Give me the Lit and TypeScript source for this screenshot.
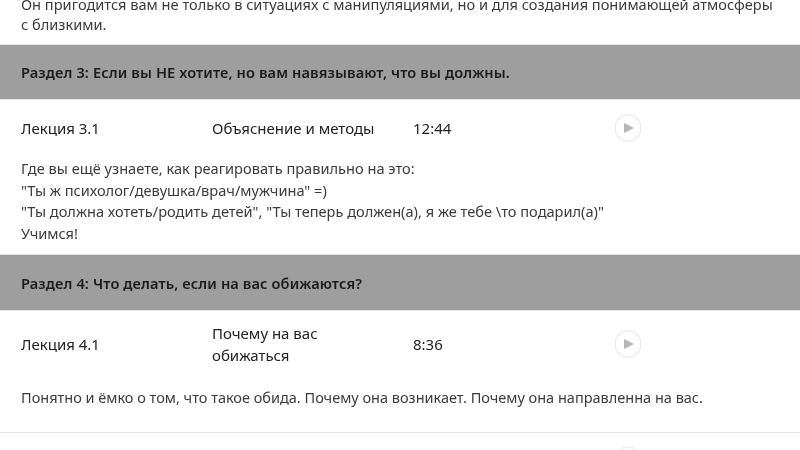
import { LitElement, html, css } from "lit";
import { customElement } from "lit/decorators.js";

const play = html`<svg class="play" viewBox="0 0 28 28" width="28" height="28" aria-hidden="true">
  <circle cx="14" cy="14" r="13" fill="none" stroke="#f0f0f0" stroke-width="1.6"></circle>
  <path d="M10 9 L20 14 L10 19 Z" fill="#b6b6b6"></path>
</svg>`;

@customElement("app-root")
export class AppRoot extends LitElement {
  static styles = css`
    :host { display: block; width: 800px; height: 450px; overflow: hidden; background: #fff; }
    .page { margin-top: -6px; font-family: "Noto Sans", "Open Sans", sans-serif; font-size: 14.6px; color: #333; filter: blur(0.5px); }
    .text { padding: 0 21px; line-height: 21.5px; color: #3c3c3c; }
    .intro { height: 50px; line-height: 20px; }
    .band { height: 54px; background: #9e9e9e; border-top: 1px solid #e4e4e4; border-bottom: 1px solid #e4e4e4; display: flex; align-items: center; padding: 0 21px; font-weight: 600; color: #1c1c1c; letter-spacing: 0.11px; }
    .band.second { height: 55px; }
    .row { display: grid; grid-template-columns: 191px 201px 201px 28px; align-items: center; padding: 0 21px; height: 56px; color: #222; font-size: 15px; }
    .row.tall { height: 65px; }
    .row.last { height: 54px; }
    .row span { line-height: 22px; }
    .desc-a { padding-top: 2px; height: 96px; }
    .desc-b { padding-top: 11px; height: 45px; border-bottom: 1px solid #e4e4e4; font-size: 14.5px; }
    .play { display: block; }
  `;

  render() {
    return html`<div class="page">
      <div class="text intro">Он пригодится вам не только в ситуациях с манипуляциями, но и для создания понимающей атмосферы<br />с близкими.</div>
      <div class="band">Раздел 3: Если вы НЕ хотите, но вам навязывают, что вы должны.</div>
      <div class="row"><span>Лекция 3.1</span><span>Объяснение и методы</span><span>12:44</span>${play}</div>
      <div class="text desc-a">Где вы ещё узнаете, как реагировать правильно на это:<br />"Ты ж психолог/девушка/врач/мужчина" =)<br />"Ты должна хотеть/родить детей", "Ты теперь должен(а), я же тебе \\то подарил(а)"<br />Учимся!</div>
      <div class="band second">Раздел 4: Что делать, если на вас обижаются?</div>
      <div class="row tall"><span>Лекция 4.1</span><span>Почему на вас<br />обижаться</span><span>8:36</span>${play}</div>
      <div class="text desc-b">Понятно и ёмко о том, что такое обида. Почему она возникает. Почему она направленна на вас.</div>
      <div class="row last"><span></span><span></span><span></span>${play}</div>
    </div>`;
  }
}
